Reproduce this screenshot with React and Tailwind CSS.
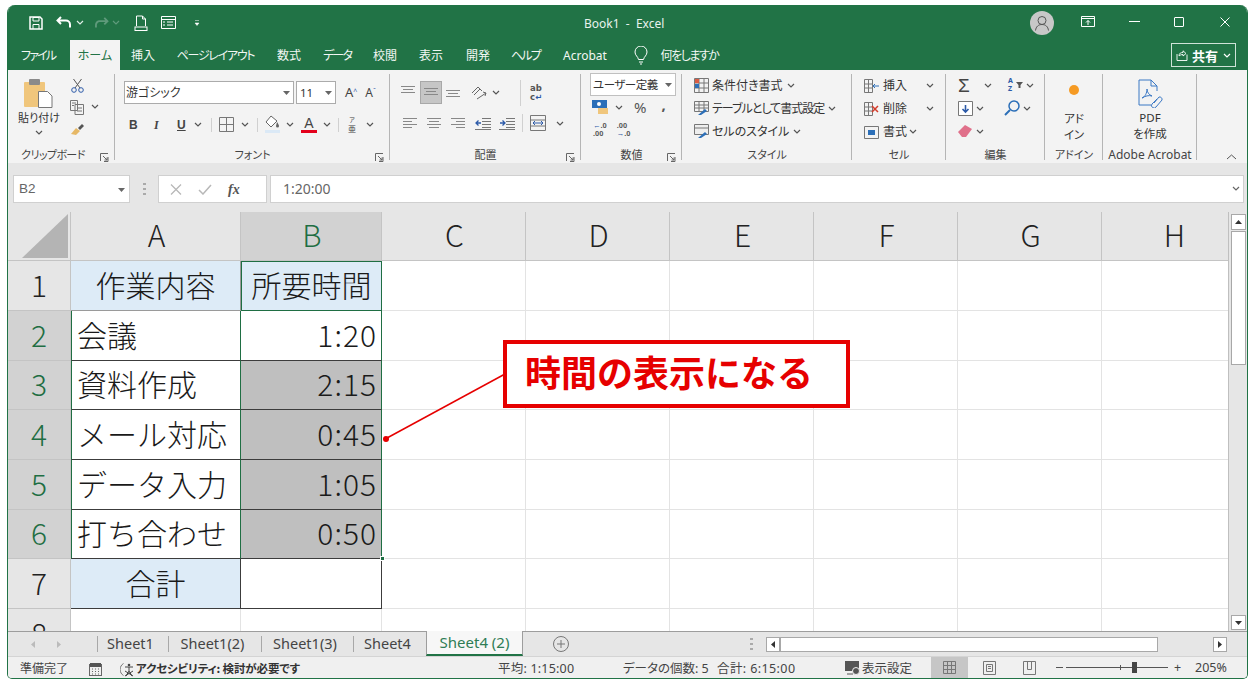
import React from "react";

const Chev = ({ className = "", c = "#555" }) => (
  <svg width="8" height="5" viewBox="0 0 8 5" className={className}><path d="M1 1l3 3 3-3" fill="none" stroke={c} strokeWidth="1.2" /></svg>
);
const Caret = ({ className = "" }) => (
  <svg width="7" height="4" viewBox="0 0 7 4" className={className}><path d="M0 0h7L3.5 4z" fill="#666" /></svg>
);
const Launcher = () => (
  <svg width="9" height="9" viewBox="0 0 9 9"><path d="M.5 8V.5H8M8 4v4.5H4M3 3l4 4M7 4.500V7H4.500" fill="none" stroke="#666" /></svg>
);
const Lines = ({ kind = "c", y = 0, h = 3 }) => {
  const rows = kind === "l" ? [[1, 15], [1, 10], [1, 15], [1, 10]] : kind === "r" ? [[1, 15], [6, 15], [1, 15], [6, 15]] : [[1, 15], [3, 13], [1, 15], [3, 13]];
  return (
    <svg width="16" height="14" viewBox="0 0 16 14">
      {(h === 3 ? rows.slice(0, 3) : rows).map((r, i) => <path key={i} d={`M${r[0]} ${y + 2.500 + i * 3}H${r[1]}`} stroke="#888" />)}
    </svg>
  );
};
const Group = ({ w, label, launcher, children, noSep, labelClass = "" }) => (
  <div className="relative h-[93px] shrink-0 flex flex-col" style={{ width: w }}>
    <div className="h-[76px] relative">{children}</div>
    <div className={`h-[17px] flex items-center justify-center text-[11px] leading-none text-[#444] ${labelClass}`}>{label}</div>
    {launcher && <div className="absolute right-[6px] bottom-[1px]"><Launcher /></div>}
    {!noSep && <div className="absolute right-0 top-[4px] bottom-[3px] w-px bg-[#b5b5b5]" />}
  </div>
);
const Cell = ({ children, className = "bg-white border-[#e3e3e3]" }) => (
  <div className={`flex items-center overflow-hidden border-r border-b pb-[4px] text-[30px] font-light leading-none text-[#1a1a1a] [font-feature-settings:normal] font-['Noto_Sans_CJK_JP',sans-serif] ${className}`}>{children}</div>
);
const Head = ({ children, on }) => (
  <div className={`flex items-center justify-center border-r border-b border-[#c4c4c4] pb-[3px] pl-[2px] text-[30px] font-light font-['Noto_Sans_CJK_JP',sans-serif] ${on ? "bg-[#d2d2d2] text-[#1f6e43]" : "bg-[#e6e6e6] text-[#222]"}`}>{children}</div>
);
const Tab = ({ children, ml, w, t = "" }) => (
  <div className={`text-[12px] text-[#f2f7f4] leading-none text-center shrink-0 whitespace-nowrap pt-[2px] ${t}`} style={{ marginLeft: ml, width: w }}>{children}</div>
);
const SheetTab = ({ children, w }) => (
  <div className="flex items-center justify-center h-[16px] border-r border-[#a8a8a8] text-[14.500px] text-[#444] shrink-0 pr-[5px]" style={{ width: w }}>{children}</div>
);

export default function App() {
  const rows = [
    { n: 1, a: "作業内容", b: "所要時間", head: true },
    { n: 2, a: "会議", b: "1:20", active: true },
    { n: 3, a: "資料作成", b: "2:15" },
    { n: 4, a: "メール対応", b: "0:45" },
    { n: 5, a: "データ入力", b: "1:05" },
    { n: 6, a: "打ち合わせ", b: "0:50" },
    { n: 7, a: "合計", b: "", total: true },
    { n: 8, a: "", b: "", blank: true },
  ];
  return (
    <div className="w-[1255px] h-[685px] bg-white pt-[5px] pl-[7px] overflow-hidden [font-feature-settings:'palt'] font-['Noto_Sans','Noto_Sans_CJK_JP',sans-serif]">
      <div className="w-[1241px] h-[674px] rounded-t-[8px] rounded-b-[5px] overflow-hidden border-x border-b border-[#217346] bg-[#e6e6e6] flex flex-col relative">
        {/* Title bar */}
        <div className="h-[35px] bg-[#217346] flex items-center shrink-0 relative">
          <svg className="ml-[21px]" width="14" height="14" viewBox="0 0 14 14"><path d="M1 1h10l2 2v10H1z" fill="none" stroke="#fff" strokeWidth="1.500" /><path d="M4 1.500h6v3.500H4zM4 13V8.500h6V13" fill="none" stroke="#fff" /></svg>
          <svg className="ml-[13px]" width="16" height="13" viewBox="0 0 16 13"><path d="M5 1L1.500 4.500 5 8M2 4.500h8a4 4 0 0 1 4 4v3" fill="none" stroke="#fff" strokeWidth="2" /></svg>
          <Chev className="ml-[4px]" c="#dfeee6" />
          <svg className="ml-[10px]" width="15" height="12" viewBox="0 0 16 13"><path d="M11 1l3.500 3.500L11 8M14 4.500H6a4 4 0 0 0-4 4v3" fill="none" stroke="#5f9a7b" strokeWidth="2" /></svg>
          <Chev className="ml-[3px]" c="#5f9a7b" />
          <svg className="ml-[14px]" width="14" height="16" viewBox="0 0 14 16"><path d="M2.500 11V1h6l3 3v7M8.500 1v3h3" fill="none" stroke="#fff" /><rect x="1" y="12" width="12" height="3.500" fill="none" stroke="#fff" /></svg>
          <svg className="ml-[13px]" width="15" height="13" viewBox="0 0 15 13"><path d="M.5.500h14v12H.5zM.5 3.500h14M6 6h6M6 9h6M2 6h2M2 9h2" fill="none" stroke="#fff" /></svg>
          <svg className="ml-[18px]" width="6" height="6" viewBox="0 0 6 6"><path d="M1 .500h4M1 3h4L3 5.500z" fill="#fff" stroke="#fff" strokeWidth=".5" /></svg>
          <div className="absolute left-[576px] top-[13px] text-[12px] text-[#e8f2ed] whitespace-pre leading-none">Book1  -  Excel</div>
          <div className="ml-auto mr-[193px] w-[24px] h-[24px] rounded-full bg-[#c8c8c8] flex items-center justify-center">
            <svg width="16" height="16" viewBox="0 0 16 16"><circle cx="8" cy="5.500" r="4" fill="none" stroke="#555" /><path d="M1.500 15.500c.5-4 3-6 6.500-6s6 2 6.500 6" fill="none" stroke="#555" /></svg>
          </div>
          <div className="absolute right-[152px] top-[11px]">
            <svg width="14" height="11" viewBox="0 0 14 11"><path d="M.5.500h13v10H.5zM.5 2.500h13M7 9V4.500M5 6.500l2-2 2 2" fill="none" stroke="#fff" /></svg>
          </div>
          <div className="absolute right-[107px] top-[16px] w-[11px] h-px bg-white" />
          <div className="absolute right-[63px] top-[12px] w-[10px] h-[10px] border border-white rounded-[1px]" />
          <svg className="absolute right-[17px] top-[12px]" width="10" height="10" viewBox="0 0 10 10"><path d="M.5.500l9 9M9.500.500l-9 9" stroke="#fff" /></svg>
        </div>
        {/* Tabs */}
        <div className="h-[30px] bg-[#217346] flex items-center shrink-0 relative">
          <Tab ml="13px" w="34px" t="tracking-[-1.8px]">ファイル</Tab>
          <div className="ml-[15px] w-[50px] h-[30px] bg-[#f3f3f3] text-[12px] text-[#217346] flex items-center justify-center shrink-0 pt-[2px]">ホーム</div>
          <Tab ml="11px" w="24px">挿入</Tab>
          <Tab ml="21px" w="79px" t="tracking-[-1.3px]">ページレイアウト</Tab>
          <Tab ml="22px" w="23px">数式</Tab>
          <Tab ml="23px" w="28px" t="tracking-[-1.8px]">データ</Tab>
          <Tab ml="22px" w="24px">校閲</Tab>
          <Tab ml="22px" w="24px">表示</Tab>
          <Tab ml="23px" w="23px">開発</Tab>
          <Tab ml="22px" w="29px" t="tracking-[-1.8px]">ヘルプ</Tab>
          <Tab ml="22px" w="46px">Acrobat</Tab>
          <svg className="ml-[26px] shrink-0" width="14" height="19" viewBox="0 0 14 19"><path d="M4.500 13.500C4 10.500 1 9.500 1 6a6 6 0 0 1 12 0c0 3.500-3 4.500-3.500 7.500zM5 16h4M6 18h2" fill="none" stroke="#fff" /></svg>
          <Tab ml="12px" w="59px" t="tracking-[-1.500px]">何をしますか</Tab>
          <div className="absolute right-[11px] top-[3px] w-[65px] h-[24px] border border-[#cfe3d8] flex items-center text-white">
            <svg className="ml-[4px]" width="12" height="11" viewBox="0 0 12 11"><path d="M1 4v6.500h10V4.500M3 6c0-3 2-3.500 4-3.500V.8L10 3.500 7 6V4.500C5.500 4.500 4 5 3 6z" fill="none" stroke="#fff" strokeWidth=".9" /></svg>
            <span className="ml-[4px] text-[13px] font-bold leading-none font-['Noto_Sans_CJK_JP',sans-serif]">共有</span>
            <Chev className="ml-[5px]" c="#fff" />
          </div>
        </div>
        {/* Ribbon */}
        <div className="h-[93px] bg-[#f3f3f3] flex shrink-0 relative">
          <Group w="107px" label="クリップボード" launcher labelClass="pr-[17px] tracking-[-0.6px]">
            <div className="flex pt-[8px] pl-[9px]">
              <div className="w-[44px] flex flex-col items-center">
                <svg width="32" height="30" viewBox="0 0 32 30"><rect x="1" y="4" width="21" height="25" rx="1" fill="#f0c67c" /><rect x="6" y="1" width="11" height="6" rx="1" fill="#8a8a8a" /><path d="M15.500 13.500h9l4.500 4.500v11.500h-13.500z" fill="#fff" stroke="#777" /></svg>
                <div className="text-[11px] leading-none mt-[4px] text-[#333] whitespace-nowrap">貼り付け</div>
                <Chev className="mt-[7px]" />
              </div>
              <div className="ml-[6px] flex flex-col items-center w-[20px]">
                <svg width="13" height="15" viewBox="0 0 13 15"><path d="M2.500 1l6.500 9M10.500 1L4 10" stroke="#555" fill="none" /><circle cx="3" cy="12" r="2.300" fill="none" stroke="#2c5aa8" /><circle cx="10" cy="12" r="2.300" fill="none" stroke="#2c5aa8" /></svg>
                <svg className="mt-[7px]" width="14" height="15" viewBox="0 0 14 15"><path d="M.5.500h7v10h-7zM5 4.500h8.500v10H5zM2 3h4M2 5.500h2M7 8h5M7 11h5" fill="#f3f3f3" stroke="#777" /></svg>
                <svg className="mt-[8px]" width="15" height="13" viewBox="0 0 15 13"><path d="M1 11l5-6 4 3-4 4z" fill="#e6b866" /><path d="M8 5l4-4 2 2-4 4z" fill="#555" /></svg>
              </div>
              <Chev className="ml-[4px] mt-[26px]" />
            </div>
          </Group>
          <Group w="275px" label="フォント" launcher>
            <div className="flex items-center pt-[11px] pl-[9px]">
              <div className="w-[170px] h-[23px] bg-white border border-[#ababab] flex items-center text-[12px] pl-[1px] pt-[1px] text-[#333]">游ゴシック<Caret className="ml-auto mr-[3px]" /></div>
              <div className="ml-[2px] w-[40px] h-[23px] bg-white border border-[#ababab] flex items-center text-[11.500px] pl-[3px] pt-[1px] text-[#333]">11<Caret className="ml-auto mr-[3px]" /></div>
              <span className="ml-[9px] text-[13px] text-[#444] leading-none">A<sup className="text-[7px] text-[#2c5aa8]">^</sup></span>
              <span className="ml-[8px] text-[12px] text-[#444] leading-none">A<sup className="text-[7px] text-[#2c5aa8]">ˇ</sup></span>
            </div>
            <div className="flex items-center pt-[11px] pl-[14px] text-[#444] h-[30px]">
              <span className="w-[10px] text-[12px] font-bold font-['Liberation_Sans',sans-serif]">B</span>
              <span className="ml-[15px] w-[8px] text-[12px] font-bold italic font-['Liberation_Serif',serif]">I</span>
              <span className="ml-[15px] w-[10px] text-[12px] font-bold underline font-['Liberation_Sans',sans-serif]">U</span>
              <Chev className="ml-[7px]" />
              <div className="ml-[9px] w-px h-[14px] bg-[#d0d0d0]" />
              <svg className="ml-[7px]" width="15" height="15" viewBox="0 0 15 15"><path d="M.5.500h14v14H.5zM7.500.500v14M.5 7.500h14" fill="none" stroke="#777" /></svg>
              <Chev className="ml-[7px]" />
              <div className="ml-[8px] w-px h-[14px] bg-[#d0d0d0]" />
              <svg className="ml-[7px]" width="16" height="19" viewBox="0 0 16 19"><path d="M6 1L1 7l5 5 6-6z" fill="#fff" stroke="#666" /><path d="M12 7c1 1.500 2 3 2 4a1.500 1.500 0 0 1-3 0" fill="#666" /><rect y="15" width="15" height="3" fill="#dbe9f6" /></svg>
              <Chev className="ml-[5px]" />
              <div className="ml-[7px] w-[16px] flex flex-col items-center">
                <span className="text-[14px] leading-[14px] font-['Liberation_Sans',sans-serif]">A</span>
                <div className="w-[16px] h-[3px] bg-[#e3001b]" />
              </div>
              <Chev className="ml-[6px]" />
              <div className="ml-[7px] w-px h-[14px] bg-[#d0d0d0]" />
              <span className="ml-[7px] w-[12px] text-[8px] leading-[9px] text-center"><span className="block text-[6px] leading-[7px]">ア</span>亜</span>
              <Chev className="ml-[8px]" />
            </div>
          </Group>
          <Group w="191px" label="配置" launcher>
            <div className="flex items-center pt-[11px] pl-[10px] h-[34px]">
              <Lines kind="c" y={-2} />
              <div className="ml-[4px] w-[22px] h-[23px] bg-[#c6c6c6] border border-[#a8a8a8] flex items-center justify-center"><Lines kind="c" /></div>
              <div className="ml-[3px]"><Lines kind="c" y={2} /></div>
              <svg className="ml-[9px]" width="18" height="16" viewBox="0 0 18 16"><path d="M2 8l6-6 4 4M4 10l6-6M7 14l9-6M13 7l3 1-1 3" fill="none" stroke="#666" /></svg>
              <Chev className="ml-[4px]" />
              <div className="ml-[20px] w-px h-[26px] bg-[#d0d0d0]" />
              <div className="ml-[9px] text-[8.500px] leading-[9px] font-bold text-[#555] font-['DejaVu_Sans',sans-serif]">ab<br />c<span className="text-[#2c5aa8]">↵</span></div>
            </div>
            <div className="flex items-center pt-[10px] pl-[12px]">
              <Lines kind="l" h={4} />
              <div className="ml-[8px]"><Lines kind="c" h={4} /></div>
              <div className="ml-[8px]"><Lines kind="r" h={4} /></div>
              <svg className="ml-[9px]" width="16" height="13" viewBox="0 0 16 13"><path d="M7 1.500h9M7 4.500h9M7 7.500h9M7 10.500h9M0 12.500h16" stroke="#777" /><path d="M6 6H1M3.500 3.500L1 6l2.500 2.500" stroke="#2c5aa8" fill="none" strokeWidth="1.300" /></svg>
              <svg className="ml-[8px]" width="16" height="13" viewBox="0 0 16 13"><path d="M7 1.500h9M7 4.500h9M7 7.500h9M7 10.500h9M0 12.500h16" stroke="#777" /><path d="M1 6h5M3.500 3.500L6 6 3.500 8.500" stroke="#2c5aa8" fill="none" strokeWidth="1.300" /></svg>
              <div className="ml-[7px] w-px h-[18px] bg-[#d0d0d0]" />
              <svg className="ml-[7px]" width="16" height="16" viewBox="0 0 16 16"><path d="M.5.500h15v15H.5zM.5 5h15M.5 11h15" fill="none" stroke="#777" /><path d="M3 8h10M5 6l-2 2 2 2M11 6l2 2-2 2" fill="none" stroke="#2c5aa8" /></svg>
              <Chev className="ml-[10px]" />
            </div>
          </Group>
          <Group w="101px" label="数値" launcher>
            <div className="pt-[3px] pl-[9px]">
              <div className="w-[86px] h-[23px] bg-white border border-[#c0c0c0] flex items-center text-[11.500px] tracking-[-0.5px] pl-[2px] text-[#333] whitespace-nowrap">ユーザー定義<Caret className="ml-auto mr-[3px]" /></div>
              <div className="flex items-center mt-[1px] h-[20px] pl-[2px]">
                <svg width="17" height="16" viewBox="0 0 17 16"><rect x="0" y="1" width="15" height="8" fill="#2c6fb8" /><circle cx="7" cy="5" r="2" fill="#fff" /><rect x="6" y="9" width="10" height="6" fill="#f0c67c" /></svg>
                <Chev className="ml-[6px]" />
                <span className="ml-[11px] text-[15px] leading-none text-[#555]">%</span>
                <span className="ml-[15px] text-[15px] leading-none font-bold text-[#555] -mt-[6px]">,</span>
              </div>
              <div className="flex items-center mt-[5px] pl-[3px] text-[7.500px] leading-[8px] font-bold text-[#555] font-['Liberation_Sans',sans-serif]">
                <div><span className="text-[#2c5aa8]">←</span>.0<br />.00</div>
                <div className="ml-[10px]">.00<br /><span className="text-[#2c5aa8]">→</span>.0</div>
              </div>
            </div>
          </Group>
          <Group w="170px" label="スタイル">
            <div className="pl-[12px] pt-[7px] flex flex-col gap-[6px] text-[12px] leading-[17px] text-[#333]">
              <div className="flex items-center">
                <svg width="15" height="15" viewBox="0 0 15 15"><path d="M.5.500h14v14H.5zM5 .500v14M10 .500v14M.5 5h14M.5 10h14" fill="none" stroke="#777" /><rect x="1" y="1" width="4" height="4" fill="#d95b43" /><rect x="1" y="6" width="4" height="4" fill="#2c6fb8" /></svg>
                <span className="ml-[3px]">条件付き書式</span><Chev className="ml-[4px]" />
              </div>
              <div className="flex items-center">
                <svg width="15" height="15" viewBox="0 0 15 15"><path d="M.5.500h14v10H.5zM.5 4h14M.5 7h14M5 .500v10M10 .500v10" fill="none" stroke="#777" /><path d="M4 14l7-6 2 2-6 4z" fill="#2c6fb8" /></svg>
                <span className="ml-[3px] tracking-[-1px]">テーブルとして書式設定</span><Chev className="ml-[4px]" />
              </div>
              <div className="flex items-center">
                <svg width="15" height="15" viewBox="0 0 15 15"><path d="M.5.500h14v10H.5zM.5 4h14" fill="#eee" stroke="#777" /><path d="M4 14l7-6 2 2-6 4z" fill="#2c6fb8" /></svg>
                <span className="ml-[3px]">セルのスタイル</span><Chev className="ml-[4px]" />
              </div>
            </div>
          </Group>
          <Group w="94px" label="セル">
            <div className="pl-[12px] pt-[7px] flex flex-col gap-[6px] text-[12px] leading-[17px] text-[#333]">
              <div className="flex items-center w-[70px]">
                <svg width="15" height="14" viewBox="0 0 15 14"><path d="M.5.500h8v13h-8zM.5 5h8M.5 9h8M4.500.500v13" fill="none" stroke="#777" /><path d="M15 7H9M11 5L9 7l2 2" fill="none" stroke="#2c6fb8" /></svg>
                <span className="ml-[4px]">挿入</span><Chev className="ml-auto" />
              </div>
              <div className="flex items-center w-[70px]">
                <svg width="15" height="14" viewBox="0 0 15 14"><path d="M.5.500h8v13h-8zM.5 5h8M.5 9h8M4.500.500v13" fill="none" stroke="#777" /><path d="M8 4l6 6M14 4l-6 6" stroke="#d43b2a" strokeWidth="1.500" /></svg>
                <span className="ml-[4px]">削除</span><Chev className="ml-auto" />
              </div>
              <div className="flex items-center">
                <svg width="15" height="14" viewBox="0 0 15 14"><path d="M.5 1.500h14v12H.5z" fill="none" stroke="#777" /><rect x="4" y="5" width="7" height="5" fill="#2c6fb8" /></svg>
                <span className="ml-[4px]">書式</span><Chev className="ml-[2px]" />
              </div>
            </div>
          </Group>
          <Group w="99px" label="編集">
            <div className="pl-[12px] pt-[5px]">
              <div className="flex items-center h-[20px]">
                <span className="w-[16px] text-[19px] leading-none text-[#444] font-['Liberation_Sans',sans-serif]">Σ</span>
                <Chev className="ml-[10px]" />
                <span className="ml-[16px] w-[8px] text-[7px] leading-[8px] font-bold text-[#2c5aa8]">A<br />Z</span>
                <svg width="7" height="6" viewBox="0 0 7 6"><path d="M0 0h7L4.500 3v3h-2V3z" fill="#555" /></svg>
                <Chev className="ml-[3px]" />
              </div>
              <div className="flex items-center h-[20px] mt-[3px]">
                <svg width="15" height="15" viewBox="0 0 15 15"><path d="M.5.500h14v14H.5z" fill="#fff" stroke="#777" /><path d="M7.500 4v7M4.500 8l3 3 3-3" fill="none" stroke="#2c5aa8" strokeWidth="1.600" /></svg>
                <Chev className="ml-[3px]" />
                <svg className="ml-[20px]" width="16" height="16" viewBox="0 0 16 16"><circle cx="10" cy="6" r="5" fill="none" stroke="#2c6fb8" strokeWidth="1.500" /><path d="M6 10l-5 5" stroke="#2c6fb8" strokeWidth="2" /></svg>
                <Chev className="ml-[3px]" />
              </div>
              <div className="flex items-center h-[20px] mt-[3px]">
                <svg width="14" height="12" viewBox="0 0 14 12"><path d="M0 7l7-7 7 4-6 8H4z" fill="#e0708a" /></svg>
                <Chev className="ml-[4px]" />
              </div>
            </div>
          </Group>
          <Group w="58px" label="アドイン">
            <div className="flex flex-col items-center pt-[15px]">
              <div className="w-[10px] h-[10px] rounded-full bg-[#f59a23]" />
              <div className="mt-[16px] text-[11.500px] leading-[16px] text-center text-[#333]">アド<br />イン</div>
            </div>
          </Group>
          <Group w="94px" label="Adobe Acrobat" labelClass="whitespace-nowrap text-[12px]">
            <div className="flex flex-col items-center pt-[9px]">
              <svg width="26" height="29" viewBox="0 0 26 29"><path d="M14 26H2V1h12l6 6v5" fill="none" stroke="#3b78c4" /><path d="M14 1v6h6M5 19c3-1 5-5 5-9 0 3 2 6 5 7-3-1-7 0-10 2z" fill="none" stroke="#3b78c4" /><path d="M17 24l5-6a2.500 2.500 0 0 1 3 3l-6 7a2.500 2.500 0 0 1-4-3l5-5" fill="none" stroke="#3b78c4" /></svg>
              <div className="mt-[2px] text-[11.500px] leading-[16px] text-center text-[#333]">PDF<br />を作成</div>
            </div>
          </Group>
          <svg className="absolute right-[10px] bottom-[3px]" width="11" height="6" viewBox="0 0 11 6"><path d="M1 5l4.500-4L10 5" fill="none" stroke="#555" /></svg>
        </div>
        {/* Formula bar */}
        <div className="h-[49px] pt-[12px] flex shrink-0 bg-[#e6e6e6]">
          <div className="ml-[5px] w-[117px] h-[28px] bg-white border border-[#d0d0d0] flex items-center pl-[5px] pt-[1px] text-[13.500px] text-[#666] font-['Liberation_Sans',sans-serif]">B2<Caret className="ml-auto mr-[4px]" /></div>
          <div className="ml-[13px] mt-[8px] w-[3px] h-[12px] flex flex-col justify-between">
            <div className="h-[2px] bg-[#aaa]" /><div className="h-[2px] bg-[#aaa]" /><div className="h-[2px] bg-[#aaa]" />
          </div>
          <div className="ml-[12px] w-[109px] h-[28px] bg-white border border-[#d0d0d0] flex items-center">
            <svg className="ml-[11px]" width="12" height="11" viewBox="0 0 12 11"><path d="M1 .500l10 10M11 .500l-10 10" stroke="#b8b8b8" strokeWidth="1.300" /></svg>
            <svg className="ml-[16px]" width="14" height="11" viewBox="0 0 14 11"><path d="M1 6l4 4 8-9" fill="none" stroke="#b8b8b8" strokeWidth="1.500" /></svg>
            <span className="ml-[16px] text-[14px] italic font-bold text-[#555] font-['Liberation_Serif',serif]">fx</span>
          </div>
          <div className="ml-[3px] flex-1 mr-[3px] h-[28px] bg-white border border-[#d0d0d0] flex items-center pl-[12px] pb-[2px] text-[14px] text-[#666] font-['Noto_Sans',sans-serif]">1:20:00<Chev className="ml-auto mr-[3px]" c="#666" /></div>
        </div>
        {/* Sheet */}
        <div className="h-[419px] shrink-0 flex relative overflow-hidden">
          <div className="flex-1 min-w-0 overflow-hidden grid grid-cols-[63px_170px_141px_144px_144px_144px_144px_144px_144px] grid-rows-[49px_50px_50px_49px_50px_50px_49px_50px_50px] bg-white">
            <div className="bg-[#e6e6e6] border-r border-b border-[#c4c4c4] flex items-end justify-end pr-[2px] pb-[2px]">
              <svg width="46" height="44" viewBox="0 0 46 44"><path d="M46 0v44H0z" fill="#b4b4b4" /></svg>
            </div>
            {["A", "B", "C", "D", "E", "F", "G", "H"].map((c) => <Head key={c} on={c === "B"}>{c}</Head>)}
            {rows.map((r) => (
              <React.Fragment key={r.n}>
                <div className={`flex items-center justify-center border-r border-b border-[#c4c4c4] pb-[3px] text-[30px] font-light font-['Noto_Sans_CJK_JP',sans-serif] ${r.n >= 2 && r.n <= 6 ? "bg-[#d2d2d2] text-[#1f6e43]" : "bg-[#e6e6e6] text-[#222]"}`}>{r.n}</div>
                {r.blank ? <Cell /> : (
                  <Cell className={
                    r.head ? "justify-center bg-[#ddebf7] border-[#9a9a9a]" :
                    r.total ? "justify-center bg-[#ddebf7] border-[#3c3c3c]" :
                    "pl-[5px] whitespace-nowrap bg-white border-l border-l-[#1f6e43] border-r-[#1f6e43] border-b-[#3c3c3c]"
                  }>{r.a}</Cell>
                )}
                {r.blank ? <Cell /> : (
                  <Cell className={
                    r.head ? "justify-center bg-[#ddebf7] border-l border-t border-[#1f6e43]" :
                    r.total ? "bg-white border-[#3c3c3c]" :
                    `justify-end pr-[4px] tracking-[1px] border-r-[#1f6e43] border-b-[#3c3c3c] ${r.active ? "bg-white" : "bg-[#bfbfbf]"}`
                  }>{r.b}</Cell>
                )}
                {[0, 1, 2, 3, 4, 5].map((i) => <Cell key={i} />)}
              </React.Fragment>
            ))}
          </div>
          {/* Fill handle */}
          <div className="absolute left-[372px] top-[344px] w-[5px] h-[5px] bg-[#1f6e43] border border-white" />
          {/* Callout */}
          <div className="absolute left-[495px] top-[128px] w-[347px] h-[68px] border-4 border-[#e60000] bg-white flex items-center pl-[18px] pb-[6px] text-[36px] font-bold text-[#e60000] leading-none [font-feature-settings:normal] font-['Noto_Sans_CJK_JP',sans-serif] whitespace-nowrap">時間の表示になる</div>
          <svg className="absolute left-[372px] top-[160px]" width="126" height="72" viewBox="0 0 126 72"><path d="M125 2L7 66" stroke="#e60000" strokeWidth="1.500" /><circle cx="6" cy="67" r="3" fill="#e60000" /></svg>
          {/* Vertical scrollbar */}
          <div className="w-[19px] bg-[#e6e6e6] border-l border-[#bfbfbf] shrink-0 flex flex-col items-center pt-[2px]">
            <div className="w-[15px] h-[16px] bg-white border border-[#a8a8a8] flex items-center justify-center"><svg width="7" height="4" viewBox="0 0 7 4"><path d="M0 4h7L3.500 0z" fill="#333" /></svg></div>
            <div className="w-[15px] h-[134px] mt-[1px] bg-white border border-[#a8a8a8]" />
            <div className="w-[15px] h-[15px] mt-auto mb-[1px] bg-white border border-[#a8a8a8] flex items-center justify-center"><svg width="7" height="4" viewBox="0 0 7 4"><path d="M0 0h7L3.500 4z" fill="#333" /></svg></div>
          </div>
        </div>
        {/* Sheet tabs */}
        <div className="h-[25px] shrink-0 border-t border-[#9d9d9d] bg-[#e6e6e6] flex items-center relative">
          <svg className="ml-[23px]" width="4" height="7" viewBox="0 0 4 7"><path d="M4 0v7L0 3.500z" fill="#bbb" /></svg>
          <svg className="ml-[22px]" width="4" height="7" viewBox="0 0 4 7"><path d="M0 0v7l4-3.500z" fill="#bbb" /></svg>
          <div className="ml-[36px] h-[16px] w-px bg-[#a8a8a8]" />
          <SheetTab w="71px">Sheet1</SheetTab>
          <SheetTab w="93px">Sheet1(2)</SheetTab>
          <SheetTab w="92px">Sheet1(3)</SheetTab>
          <div className="w-[72px] flex justify-center text-[14.500px] text-[#444] shrink-0 pr-[5px]">Sheet4</div>
          <div className="w-[97px] h-[25px] -mt-[1px] bg-[#f7f7f7] border-x border-[#9d9d9d] border-b-2 border-b-[#217346] flex items-center justify-center text-[15px] text-[#2f7d55] shrink-0">Sheet4 (2)</div>
          <svg className="ml-[30px]" width="16" height="16" viewBox="0 0 16 16"><circle cx="8" cy="8" r="7.500" fill="none" stroke="#777" /><path d="M8 4v8M4 8h8" stroke="#777" /></svg>
          <div className="absolute left-[742px] top-[6px] w-[3px] h-[12px] flex flex-col justify-between">
            <div className="h-[2px] bg-[#aaa]" /><div className="h-[2px] bg-[#aaa]" /><div className="h-[2px] bg-[#aaa]" />
          </div>
          <div className="absolute left-[758px] top-[5px] w-[14px] h-[15px] bg-white border border-[#a8a8a8] flex items-center justify-center"><svg width="4" height="7" viewBox="0 0 4 7"><path d="M4 0v7L0 3.500z" fill="#333" /></svg></div>
          <div className="absolute left-[772px] top-[5px] w-[378px] h-[15px] bg-white border border-[#a8a8a8]" />
          <div className="absolute left-[1205px] top-[5px] w-[14px] h-[15px] bg-white border border-[#a8a8a8] flex items-center justify-center"><svg width="4" height="7" viewBox="0 0 4 7"><path d="M0 0v7l4-3.500z" fill="#333" /></svg></div>
        </div>
        {/* Status bar */}
        <div className="flex-1 bg-[#f0f0f0] flex items-center text-[12.500px] text-[#444] leading-none relative border-t border-[#d4d4d4] pt-[3px]">
          <span className="ml-[12px] text-[12px]">準備完了</span>
          <svg className="ml-[21px]" width="13" height="14" viewBox="0 0 13 14"><rect x=".5" y="2.500" width="12" height="11" fill="none" stroke="#666" /><rect x="1" y="1" width="11" height="4" fill="#555" /><path d="M3 7h1M6 7h1M9 7h1M3 9.500h1M6 9.500h1M9 9.500h1M3 12h1M6 12h1M9 12h1" stroke="#666" /></svg>
          <svg className="ml-[18px]" width="17" height="15" viewBox="0 0 17 15"><path d="M3.500 1.500a7 7 0 0 0 0 12" fill="none" stroke="#777" /><circle cx="9" cy="3" r="1.300" fill="#444" /><path d="M5 5h8M9 5v4M6 14l3-5 3 5M5 9l8 5M13 9l-8 5" fill="none" stroke="#444" /></svg>
          <span className="-ml-[1px] text-[11.500px] tracking-[-0.15px] font-bold text-[#333] font-['Noto_Sans_CJK_JP',sans-serif]">アクセシビリティ: 検討が必要です</span>
          <span className="absolute left-[490px] top-[6px] tracking-[0.2px]">平均: 1:15:00</span>
          <span className="absolute left-[615px] top-[6px]">データの個数: 5</span>
          <span className="absolute left-[709px] top-[6px] tracking-[0.4px]">合計: 6:15:00</span>
          <svg className="absolute left-[837px] top-[4px]" width="16" height="15" viewBox="0 0 16 15"><rect width="14" height="10" fill="#555" /><circle cx="11" cy="10" r="3.500" fill="#555" stroke="#f0f0f0" /><path d="M2 13h6" stroke="#555" /></svg>
          <span className="absolute left-[854px] top-[6px]">表示設定</span>
          <div className="absolute left-[923px] top-0 bottom-0 w-[37px] bg-[#c6c6c6] flex items-center justify-center">
            <svg width="13" height="13" viewBox="0 0 13 13"><path d="M.5.500h12v12H.5zM4.500.500v12M8.500.500v12M.5 4.500h12M.5 8.500h12" fill="none" stroke="#777" /></svg>
          </div>
          <svg className="absolute left-[975px] top-[4px]" width="13" height="14" viewBox="0 0 13 14"><path d="M.5.500h12v13H.5zM3.500 3.500h6v7h-6zM5 5.500h3M5 7.500h3" fill="none" stroke="#777" /></svg>
          <svg className="absolute left-[1015px] top-[4px]" width="13" height="14" viewBox="0 0 13 14"><path d="M.5.500h12v13H.5zM4.500.500v8h4v-8" fill="none" stroke="#777" /></svg>
          <div className="absolute left-[1048px] top-[10px] w-[7px] h-px bg-[#555]" />
          <div className="absolute left-[1058px] top-[10px] w-[102px] h-px bg-[#555]" />
          <div className="absolute left-[1112px] top-[8px] w-px h-[5px] bg-[#555]" />
          <div className="absolute left-[1124px] top-[5px] w-[5px] h-[11px] bg-[#444]" />
          <span className="absolute left-[1166px] top-[5px]">+</span>
          <span className="absolute left-[1187px] top-[5px]">205%</span>
        </div>
      </div>
    </div>
  );
}
